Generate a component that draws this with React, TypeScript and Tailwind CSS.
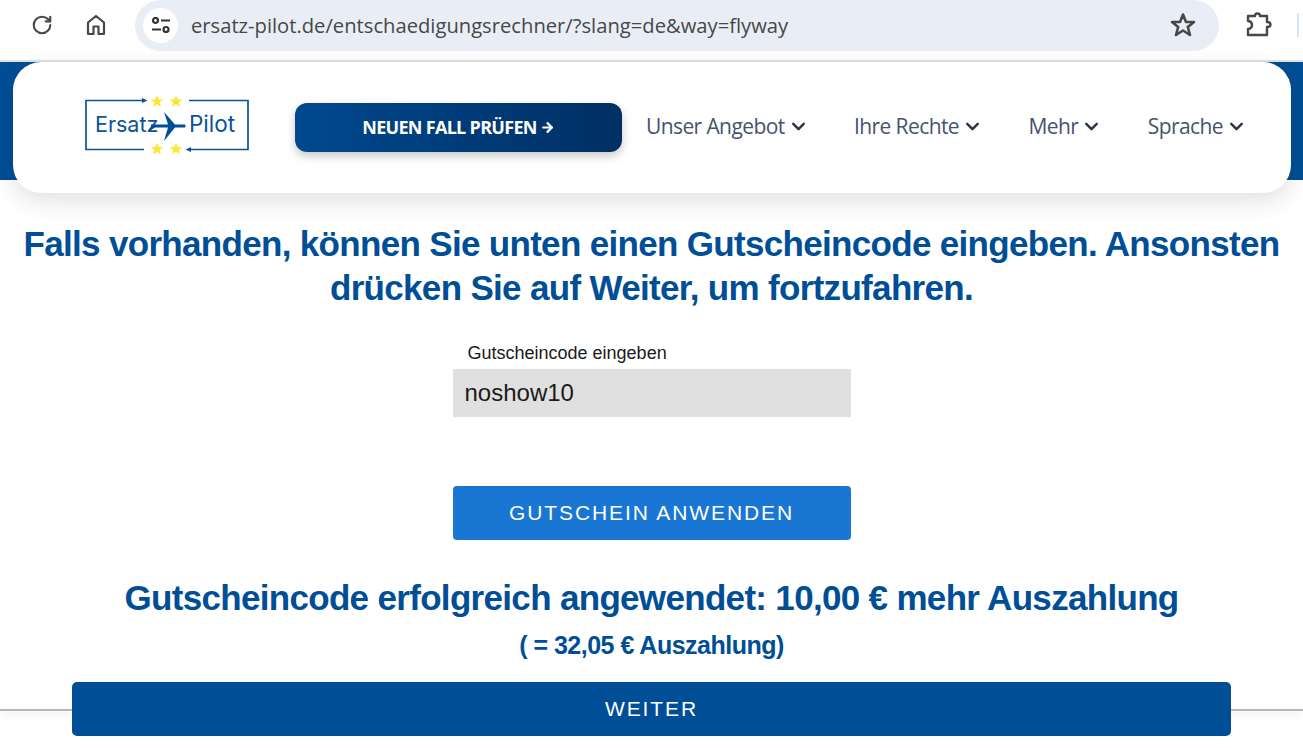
import React from 'react';
import { ChevronDown, ArrowRight, RotateCw } from 'lucide-react';

const NAV_ITEMS = ['Unser Angebot', 'Ihre Rechte', 'Mehr', 'Sprache'];

function Logo() {
  return (
    <svg width="166" height="60" viewBox="0 0 166 60" className="mb-[7px] shrink-0">
      <path d="M59 6.500H1V55.500H59" fill="none" stroke="#0b5299" strokeWidth="1.700" />
      <path d="M104 6.500H163V55.500H104" fill="none" stroke="#0b5299" strokeWidth="1.700" />
      <path d="M57 4L62.500 6.500L57 9Z" fill="#0b5299" />
      <path d="M106 53L100.500 55.500L106 58Z" fill="#0b5299" />
      {[72, 91].map((x) =>
        [7.5, 55].map((y) => (
          <path
            key={`${x}-${y}`}
            fill="#fde62f"
            transform={`translate(${x} ${y})`}
            d="M0-6.500L1.700-2H6.300L2.600 0.800L4 5.500L0 2.700L-4 5.500L-2.600 0.800L-6.300-2H-1.700Z"
          />
        ))
      )}
      <text x="10" y="38" fontFamily="Inter, sans-serif" fontSize="21.500" fill="#0b5299">Ersatz</text>
      <text x="104" y="38" fontFamily="Inter, sans-serif" fontSize="22.500" fill="#0b5299">Pilot</text>
      <path
        fill="#004e96"
        d="M79 18L90 30.500H100Q101.500 32 100 33.500H90L79 47L83 33.500H70L66 36H64L66 33.500V30.500H83Z"
      />
    </svg>
  );
}

function BrowserBar() {
  return (
    <div className="flex h-[62px] items-start border-b-2 border-[#e1e1e1] bg-white">
      <div className="flex h-[60px] w-full items-center pb-[10px]">
        <RotateCw className="ml-[31px] h-[22px] w-[22px] text-[#474747]" strokeWidth={2.300} />
        <svg width="20" height="22" viewBox="0 0 20 22" className="ml-[33px]" fill="none" stroke="#474747" strokeWidth="2.200">
          <path d="M2 20V8.500L10 2L18 8.500V20H12.500V12.500H7.500V20Z" strokeLinejoin="round" />
        </svg>
        <div className="ml-[29px] flex h-[51px] w-[1084px] items-center rounded-full bg-[#e9eef6] pl-[8px] pr-[23px]">
          <div className="flex h-[35px] w-[35px] items-center justify-center rounded-full bg-white">
            <svg width="20" height="16" viewBox="0 0 20 16" fill="none" stroke="#333" strokeWidth="2.200">
              <circle cx="4.500" cy="3.500" r="2.500" />
              <path d="M10 3.500H19M1 12.500H10" />
              <circle cx="15" cy="12.500" r="2.500" />
            </svg>
          </div>
          <span className="ml-[13px] flex-1 font-['Open_Sans',sans-serif] text-[20.200px] leading-none text-[#474747]">
            ersatz-pilot.de/entschaedigungsrechner/?slang=de&amp;way=flyway
          </span>
          <svg width="26" height="26" viewBox="0 0 26 26" fill="none" stroke="#474747" strokeWidth="2.600">
            <path d="M13 2.500L16 10H24L17.800 15L20 23L13 18.500L6 23L8.200 15L2 10H10Z" strokeLinejoin="round" />
          </svg>
        </div>
        <svg width="26" height="26" viewBox="0 0 26 26" className="ml-[27px]" fill="none" stroke="#474747" strokeWidth="2.400">
          <path d="M2 4H9Q9 1.500 11.500 1.500T14 4H21V10Q24.500 10 24.500 12.500T21 15V23H2V17Q6 16.500 6 13T2 9Z" strokeLinejoin="round" />
        </svg>
        <div className="ml-[25px] h-[24px] w-[2px] bg-[#d3e3fd]" />
      </div>
    </div>
  );
}

function SiteHeader() {
  return (
    <header className="bg-[linear-gradient(#004e96_118px,transparent_118px)] pl-[13px] pr-[12px]">
      <div className="flex h-[131px] items-center rounded-[28px] bg-white pl-[72px] shadow-[0_8px_24px_rgba(0,0,0,0.12)]">
        <Logo />
        <button className="ml-[44px] flex h-[49px] w-[327px] items-center justify-center rounded-[12px] bg-[linear-gradient(90deg,#00498f,#002f63)] font-['Open_Sans',sans-serif] text-[18px] font-bold tracking-[-0.7px] text-white shadow-[0_4px_10px_rgba(0,0,0,0.22)]">
          NEUEN FALL PRÜFEN
          <ArrowRight className="ml-[3px] h-[15px] w-[15px]" strokeWidth={3.500} />
        </button>
        <nav className="ml-[24px] flex gap-[45.500px] pb-[2px]">
          {NAV_ITEMS.map((item) => (
            <div key={item} className="flex items-center font-['Open_Sans',sans-serif] text-[21px] tracking-[-0.6px] text-[#44536f]">
              {item}
              <ChevronDown className="ml-[3px] h-[21px] w-[21px] text-[#2b3445]" strokeWidth={2.800} />
            </div>
          ))}
        </nav>
      </div>
    </header>
  );
}

export default function App() {
  return (
    <div className="relative h-[748px] w-full overflow-hidden bg-white font-['Liberation_Sans',Arial,sans-serif]">
      <BrowserBar />
      <SiteHeader />

      {/* footer rule runs behind the Weiter button */}
      <div className="absolute inset-x-0 top-[709px] h-[2px] bg-[#b5b5b5] shadow-[0_3px_6px_rgba(0,0,0,0.12)]" />

      <main className="relative flex flex-col items-center">
        <h1 className="mt-[29px] w-full text-center text-[35px] font-bold leading-[44px] tracking-[-0.68px] text-[#004e96]">
          Falls vorhanden, können Sie unten einen Gutscheincode eingeben. Ansonsten
          <br />
          drücken Sie auf Weiter, um fortzufahren.
        </h1>

        <div className="mt-[32px] w-[398px]">
          <label className="block pl-[15px] text-[18px] leading-[22px] text-[#1a1a1a]">Gutscheincode eingeben</label>
          <div className="mt-[5px] flex h-[48px] items-center bg-[#e0e0e0] pl-[12px] text-[24px] text-[#1a1a1a]">noshow10</div>
        </div>

        <button className="mt-[69px] h-[54px] w-[398px] rounded-[4px] bg-[#1976d2] text-[21px] tracking-[1.900px] text-white">
          GUTSCHEIN ANWENDEN
        </button>

        <h2 className="mt-[36px] text-center text-[35px] font-bold leading-[44px] tracking-[-0.68px] text-[#004e96]">
          Gutscheincode erfolgreich angewendet: 10,00 € mehr Auszahlung
        </h2>
        <p className="mt-[7px] text-center text-[25px] font-bold leading-[36px] tracking-[-0.5px] text-[#004e96]">
          ( = 32,05 € Auszahlung)
        </p>

        <button className="mt-[19px] h-[54px] w-[1159px] rounded-[5px] bg-[#004e96] text-[21px] tracking-[1.900px] text-white">
          WEITER
        </button>
      </main>
    </div>
  );
}
